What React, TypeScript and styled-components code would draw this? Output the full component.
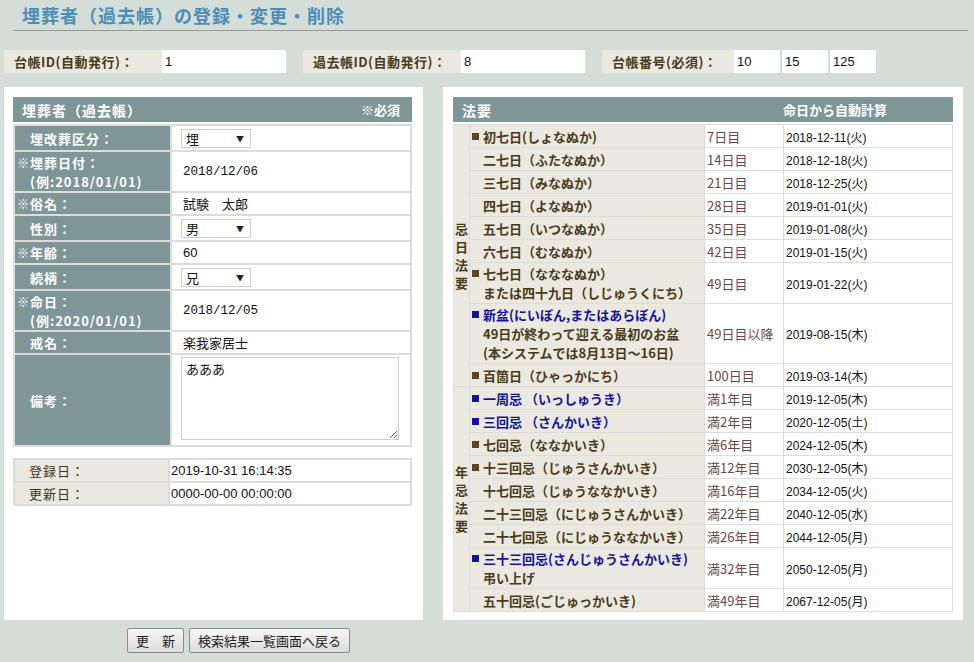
import styled, { createGlobalStyle } from 'styled-components';

const JP = `"Noto Sans CJK JP", "Noto Sans", sans-serif`;
const SANS = `"Liberation Sans", Arial, "Noto Sans CJK JP", sans-serif`;
const MONO = `"Liberation Mono", "Noto Sans CJK JP", monospace`;

const C = {
  page: '#d4ddd7',
  head: '#7f9699',
  beige: '#ebe9df',
  line: '#dcdcdc',
  brown: '#4a3a1c',
  blue: '#12129a',
  day: '#6a4848',
  title: '#4b8db6',
};

const GlobalStyle = createGlobalStyle`
  html, body {
    margin: 0;
    padding: 0;
    background: ${C.page};
  }
  body {
    font-family: ${JP};
    font-size: 13px;
    color: #111;
  }
`;

const Page = styled.div`
  width: 974px;
  min-height: 662px;
`;

const PageTitle = styled.h1`
  margin: 0 6px 0 13px;
  height: 31px;
  box-sizing: border-box;
  padding: 3px 0 0 9px;
  border-bottom: 1px solid #9b9b9b;
  font-size: 18px;
  line-height: 24px;
  font-weight: bold;
  letter-spacing: 1px;
  color: ${C.title};
`;

// 台帳ID などの上部バー
const IdBar = styled.div`
  display: flex;
  gap: 17px;
  margin: 19px 0 0 4px;
  height: 23px;
`;

const IdGroup = styled.div`
  display: flex;
`;

const IdInputs = styled.div`
  display: flex;
  gap: 2px;
`;

const IdLabel = styled.div<{ $w: number }>`
  width: ${({ $w }) => $w}px;
  box-sizing: border-box;
  padding-left: 10px;
  background: ${C.beige};
  color: ${C.brown};
  font-weight: bold;
  letter-spacing: 0.5px;
  line-height: 23px;
`;

const IdInput = styled.input<{ $w: number }>`
  width: ${({ $w }) => $w}px;
  height: 23px;
  box-sizing: border-box;
  border: none;
  outline: none;
  margin: 0;
  padding: 0 3px;
  background: #fff;
  font-family: ${SANS};
  font-size: 13px;
  color: #111;
`;

const Main = styled.div`
  display: flex;
  gap: 20px;
  margin: 14px 0 0 4px;
`;

const Panel = styled.div<{ $w: number; $pad: string }>`
  width: ${({ $w }) => $w}px;
  height: 533px;
  box-sizing: border-box;
  padding: ${({ $pad }) => $pad};
  background: #fff;
`;

const PanelHeader = styled.div<{ $right: number }>`
  display: flex;
  align-items: center;
  justify-content: space-between;
  height: 25px;
  padding: 0 ${({ $right }) => $right}px 0 9px;
  background: ${C.head};
  color: #fff;
  font-weight: bold;
`;

const HeaderTitle = styled.span`
  font-size: 14px;
  letter-spacing: 1px;
`;

const HeaderNote = styled.span`
  font-size: 13px;
`;

const FormTable = styled.table`
  width: 100%;
  margin-top: 2px;
  table-layout: fixed;
  border-collapse: separate;
  border-spacing: 2px;
  background: ${C.line};
`;

const LabelCell = styled.th<{ $h: number }>`
  height: ${({ $h }) => $h}px;
  padding: 0 0 0 2px;
  background: ${C.head};
  color: #fff;
  font-weight: bold;
  font-size: 13px;
  letter-spacing: 1px;
  line-height: 19px;
  text-align: left;
  vertical-align: middle;
`;

const LabelWrap = styled.div`
  display: flex;
  align-items: flex-start;
`;

const Mark = styled.span<{ $on: boolean }>`
  width: 13px;
  flex: none;
  font-size: 12px;
  letter-spacing: 0;
  visibility: ${({ $on }) => ($on ? 'visible' : 'hidden')};
`;

const ValueCell = styled.td<{ $top?: boolean; $font?: 'jp' | 'sans' | 'mono' }>`
  padding: ${({ $top }) => ($top ? '2px 0 0 11px' : '0 0 0 11px')};
  background: #fff;
  vertical-align: ${({ $top }) => ($top ? 'top' : 'middle')};
  font-family: ${({ $font }) => ($font === 'sans' ? SANS : $font === 'mono' ? MONO : JP)};
  font-size: ${({ $font }) => ($font === 'mono' ? '12.5px' : '13px')};
  color: #111;
`;

const FakeSelect = styled.div`
  display: flex;
  align-items: center;
  justify-content: space-between;
  width: 70px;
  height: 19px;
  box-sizing: border-box;
  margin-left: -2px;
  padding: 0 6px 0 4px;
  border: 1px solid #cfcfcf;
  background: #fff;
  font-size: 13px;

  &::after {
    content: '▼';
    font-size: 8px;
    color: #222;
  }
`;

const Memo = styled.textarea`
  display: block;
  width: 218px;
  height: 83px;
  box-sizing: border-box;
  margin: 0 0 0 -2px;
  padding: 2px 4px;
  border: 1px solid #cfcfcf;
  font-family: ${JP};
  font-size: 13px;
  line-height: 18px;
  color: #111;
`;

const StampTable = styled(FormTable)`
  margin-top: 11px;
`;

const StampLabel = styled.th`
  height: 21px;
  padding: 0 0 0 14px;
  background: ${C.beige};
  color: #3f3322;
  font-weight: normal;
  font-size: 13px;
  letter-spacing: 1px;
  text-align: left;
`;

const StampValue = styled.td`
  padding: 0 0 0 1px;
  background: #fff;
  font-family: ${SANS};
  font-size: 13px;
  color: #111;
`;

const ButtonRow = styled.div`
  display: flex;
  gap: 5px;
  margin: 8px 0 0 123px;
`;

const Button = styled.button`
  height: 25px;
  padding: 0 8px;
  border: 1px solid #8c8c8c;
  border-radius: 2px;
  background: linear-gradient(#f7f7f7, #dcdcdc);
  font-family: ${JP};
  font-size: 13px;
  color: #222;
`;

// 法要テーブル
const HoyoTable = styled.table`
  width: 500px;
  margin-top: 2px;
  table-layout: fixed;
  border-collapse: separate;
  border-spacing: 1px;
  background: ${C.line};
`;

const GroupCell = styled.td`
  padding: 0;
  background: ${C.beige};
  color: ${C.brown};
  font-weight: bold;
  font-size: 13px;
  line-height: 18px;
  text-align: center;
  vertical-align: middle;

  span {
    display: block;
  }
`;

const NameCell = styled.td<{ $h: number }>`
  height: ${({ $h }) => $h}px;
  padding: 0 0 0 2px;
  background: ${C.beige};
  vertical-align: middle;
  font-weight: bold;
  font-size: 13px;
  line-height: 19px;
  color: ${C.brown};
`;

const NameWrap = styled.div`
  display: flex;
  align-items: flex-start;
`;

const Square = styled.span<{ $color?: string }>`
  flex: none;
  width: 7px;
  height: 7px;
  margin: 6px 4px 0 0;
  background: ${({ $color }) => $color || 'transparent'};
`;

const NameLine = styled.div<{ $blue?: boolean }>`
  color: ${({ $blue }) => ($blue ? C.blue : C.brown)};
  white-space: nowrap;
`;

const DayCell = styled.td`
  padding: 0 0 0 2px;
  background: #fff;
  color: ${C.day};
  font-size: 13px;
`;

const DateCell = styled.td`
  padding: 0 0 0 2px;
  background: #fff;
  font-family: ${SANS};
  font-size: 12px;
  color: #111;
`;

type FormRow = {
  label: string[];
  req: boolean;
  h: number;
  kind: 'select' | 'text' | 'memo';
  value: string;
  font?: 'jp' | 'sans' | 'mono';
};

const formRows: FormRow[] = [
  { label: ['埋改葬区分：'], req: false, h: 24, kind: 'select', value: '埋' },
  { label: ['埋葬日付：', '(例:2018/01/01)'], req: true, h: 39, kind: 'text', value: '2018/12/06', font: 'mono' },
  { label: ['俗名：'], req: true, h: 21, kind: 'text', value: '試験　太郎' },
  { label: ['性別：'], req: false, h: 24, kind: 'select', value: '男' },
  { label: ['年齢：'], req: true, h: 21, kind: 'text', value: '60', font: 'sans' },
  { label: ['続柄：'], req: false, h: 24, kind: 'select', value: '兄' },
  { label: ['命日：', '(例:2020/01/01)'], req: true, h: 39, kind: 'text', value: '2018/12/05', font: 'mono' },
  { label: ['戒名：'], req: false, h: 21, kind: 'text', value: '楽我家居士' },
  { label: ['備考：'], req: false, h: 90, kind: 'memo', value: 'あああ' },
];

type HoyoRow = {
  lines: string[];
  mark?: 'brown' | 'blue';
  day: string;
  date: string;
  group?: string;
};

const hoyoRows: HoyoRow[] = [
  { lines: ['初七日(しょなぬか)'], mark: 'brown', day: '7日目', date: '2018-12-11(火)', group: '忌日法要' },
  { lines: ['二七日（ふたなぬか）'], day: '14日目', date: '2018-12-18(火)' },
  { lines: ['三七日（みなぬか）'], day: '21日目', date: '2018-12-25(火)' },
  { lines: ['四七日（よなぬか）'], day: '28日目', date: '2019-01-01(火)' },
  { lines: ['五七日（いつなぬか）'], day: '35日目', date: '2019-01-08(火)' },
  { lines: ['六七日（むなぬか）'], day: '42日目', date: '2019-01-15(火)' },
  { lines: ['七七日（なななぬか）', 'または四十九日（しじゅうくにち）'], mark: 'brown', day: '49日目', date: '2019-01-22(火)' },
  {
    lines: ['新盆(にいぼん,またはあらぼん)', '49日が終わって迎える最初のお盆', '(本システムでは8月13日～16日)'],
    mark: 'blue',
    day: '49日目以降',
    date: '2019-08-15(木)',
  },
  { lines: ['百箇日（ひゃっかにち）'], mark: 'brown', day: '100日目', date: '2019-03-14(木)' },
  { lines: ['一周忌 （いっしゅうき）'], mark: 'blue', day: '満1年目', date: '2019-12-05(木)', group: '年忌法要' },
  { lines: ['三回忌 （さんかいき）'], mark: 'blue', day: '満2年目', date: '2020-12-05(土)' },
  { lines: ['七回忌（ななかいき）'], mark: 'brown', day: '満6年目', date: '2024-12-05(木)' },
  { lines: ['十三回忌（じゅうさんかいき）'], mark: 'brown', day: '満12年目', date: '2030-12-05(木)' },
  { lines: ['十七回忌（じゅうななかいき）'], day: '満16年目', date: '2034-12-05(火)' },
  { lines: ['二十三回忌（にじゅうさんかいき）'], day: '満22年目', date: '2040-12-05(水)' },
  { lines: ['二十七回忌（にじゅうななかいき）'], day: '満26年目', date: '2044-12-05(月)' },
  { lines: ['三十三回忌(さんじゅうさんかいき)', '弔い上げ'], mark: 'blue', day: '満32年目', date: '2050-12-05(月)' },
  { lines: ['五十回忌(ごじゅっかいき)'], day: '満49年目', date: '2067-12-05(月)' },
];

const rowHeight = (n: number) => (n === 1 ? 22 : n === 2 ? 40 : 59);

export default function App() {
  return (
    <Page>
      <GlobalStyle />
      <PageTitle>埋葬者（過去帳）の登録・変更・削除</PageTitle>

      <IdBar>
        <IdGroup>
          <IdLabel $w={158}>台帳ID(自動発行)：</IdLabel>
          <IdInput $w={124} defaultValue="1" />
        </IdGroup>
        <IdGroup>
          <IdLabel $w={158}>過去帳ID(自動発行)：</IdLabel>
          <IdInput $w={124} defaultValue="8" />
        </IdGroup>
        <IdGroup>
          <IdLabel $w={132}>台帳番号(必須)：</IdLabel>
          <IdInputs>
            <IdInput $w={46} defaultValue="10" />
            <IdInput $w={46} defaultValue="15" />
            <IdInput $w={46} defaultValue="125" />
          </IdInputs>
        </IdGroup>
      </IdBar>

      <Main>
        <div>
          <Panel $w={419} $pad="10px 11px 0 9px">
            <PanelHeader $right={12}>
              <HeaderTitle>埋葬者（過去帳）</HeaderTitle>
              <HeaderNote>※必須</HeaderNote>
            </PanelHeader>
            <FormTable>
              <colgroup>
                <col style={{ width: 155 }} />
                <col />
              </colgroup>
              <tbody>
                {formRows.map((r) => (
                  <tr key={r.label[0]}>
                    <LabelCell $h={r.h}>
                      <LabelWrap>
                        <Mark $on={r.req}>※</Mark>
                        <div>
                          {r.label.map((l) => (
                            <div key={l}>{l}</div>
                          ))}
                        </div>
                      </LabelWrap>
                    </LabelCell>
                    <ValueCell $top={r.kind === 'memo'} $font={r.font}>
                      {r.kind === 'select' && <FakeSelect>{r.value}</FakeSelect>}
                      {r.kind === 'text' && r.value}
                      {r.kind === 'memo' && <Memo defaultValue={r.value} />}
                    </ValueCell>
                  </tr>
                ))}
              </tbody>
            </FormTable>

            <StampTable>
              <colgroup>
                <col style={{ width: 153 }} />
                <col />
              </colgroup>
              <tbody>
                <tr>
                  <StampLabel>登録日：</StampLabel>
                  <StampValue>2019-10-31 16:14:35</StampValue>
                </tr>
                <tr>
                  <StampLabel>更新日：</StampLabel>
                  <StampValue>0000-00-00 00:00:00</StampValue>
                </tr>
              </tbody>
            </StampTable>
          </Panel>
          <ButtonRow>
            <Button>更　新</Button>
            <Button>検索結果一覧画面へ戻る</Button>
          </ButtonRow>
        </div>

        <Panel $w={520} $pad="10px 10px 0">
          <PanelHeader $right={66}>
            <HeaderTitle>法要</HeaderTitle>
            <HeaderNote>命日から自動計算</HeaderNote>
          </PanelHeader>
          <HoyoTable>
            <colgroup>
              <col style={{ width: 15 }} />
              <col style={{ width: 234 }} />
              <col style={{ width: 78 }} />
              <col />
            </colgroup>
            <tbody>
              {hoyoRows.map((r) => (
                <tr key={r.lines[0]}>
                  {r.group && (
                    <GroupCell rowSpan={9}>
                      {r.group.split('').map((ch) => (
                        <span key={ch}>{ch}</span>
                      ))}
                    </GroupCell>
                  )}
                  <NameCell $h={rowHeight(r.lines.length)}>
                    <NameWrap>
                      <Square $color={r.mark === 'blue' ? C.blue : r.mark === 'brown' ? '#5a4525' : undefined} />
                      <div>
                        {r.lines.map((l, i) => (
                          <NameLine key={l} $blue={i === 0 && r.mark === 'blue'}>
                            {l}
                          </NameLine>
                        ))}
                      </div>
                    </NameWrap>
                  </NameCell>
                  <DayCell>{r.day}</DayCell>
                  <DateCell>{r.date}</DateCell>
                </tr>
              ))}
            </tbody>
          </HoyoTable>
        </Panel>
      </Main>
    </Page>
  );
}
